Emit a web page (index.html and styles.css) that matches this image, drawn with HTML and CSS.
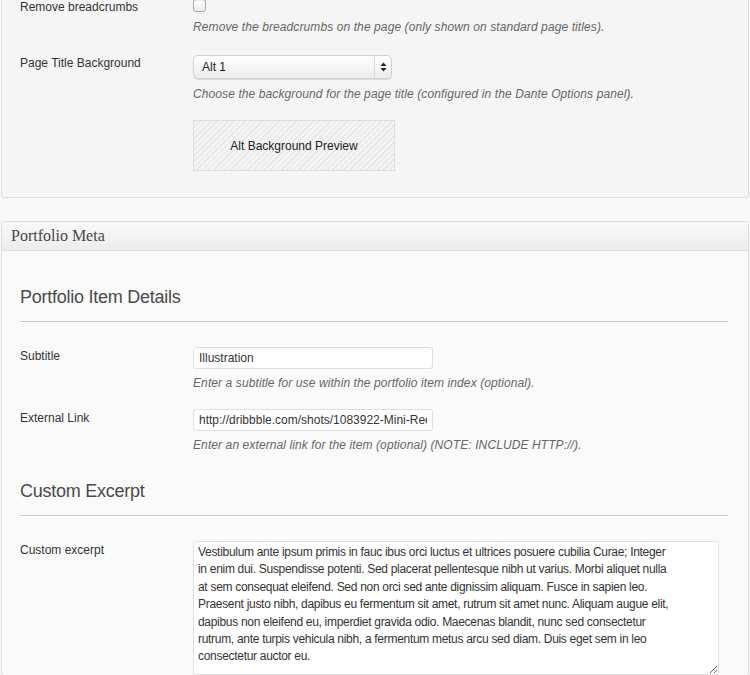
FILE: index.html
```html
<!DOCTYPE html>
<html>
<head>
<meta charset="utf-8">
<link rel="stylesheet" href="styles.css">
</head>
<body>
<div class="page">
  <section class="panel panel-top">
    <div class="field">
      <div class="label">Remove breadcrumbs</div>
      <div class="control">
        <div class="check-line"><span class="checkbox"></span></div>
        <p class="desc">Remove the breadcrumbs on the page (only shown on standard page titles).</p>
      </div>
    </div>
    <div class="field">
      <div class="label">Page Title Background</div>
      <div class="control">
        <div class="select">
          <span class="select-value">Alt 1</span>
          <span class="select-arrows">
            <svg width="7" height="10" viewBox="0 0 7 10"><path d="M3.5 0.5 L6.5 4 L0.5 4 Z M3.5 9.5 L6.5 6 L0.5 6 Z" fill="#222"/></svg>
          </span>
        </div>
        <p class="desc">Choose the background for the page title (configured in the Dante Options panel).</p>
        <div class="preview">Alt Background Preview</div>
      </div>
    </div>
  </section>

  <section class="panel panel-meta">
    <header class="panel-head">Portfolio Meta</header>
    <div class="panel-body">
      <h2 class="section-title first">Portfolio Item Details</h2>
      <div class="rule"></div>
      <div class="field">
        <div class="label">Subtitle</div>
        <div class="control">
          <input class="text" type="text" value="Illustration">
          <p class="desc">Enter a subtitle for use within the portfolio item index (optional).</p>
        </div>
      </div>
      <div class="field">
        <div class="label">External Link</div>
        <div class="control">
          <input class="text" type="text" value="http://dribbble.com/shots/1083922-Mini-Reel">
          <p class="desc">Enter an external link for the item (optional) (NOTE: INCLUDE HTTP://).</p>
        </div>
      </div>
      <h2 class="section-title">Custom Excerpt</h2>
      <div class="rule"></div>
      <div class="field">
        <div class="label">Custom excerpt</div>
        <div class="control">
          <textarea class="area">Vestibulum ante ipsum primis in fauc ibus orci luctus et ultrices posuere cubilia Curae; Integer
in enim dui. Suspendisse potenti. Sed placerat pellentesque nibh ut varius. Morbi aliquet nulla
at sem consequat eleifend. Sed non orci sed ante dignissim aliquam. Fusce in sapien leo.
Praesent justo nibh, dapibus eu fermentum sit amet, rutrum sit amet nunc. Aliquam augue elit,
dapibus non eleifend eu, imperdiet gravida odio. Maecenas blandit, nunc sed consectetur
rutrum, ante turpis vehicula nibh, a fermentum metus arcu sed diam. Duis eget sem in leo
consectetur auctor eu.</textarea>
        </div>
      </div>
    </div>
  </section>
</div>
</body>
</html>
```

FILE: styles.css
```css
html, body {
  margin: 0;
  padding: 0;
}
body {
  background: #f8f8f8;
  font-family: "Liberation Sans", Arial, sans-serif;
  font-size: 12px;
  color: #333;
  overflow: hidden;
}
.page {
  padding: 0 1px;
}
.panel {
  border: 1px solid #dfdfdf;
  border-radius: 3px;
}
.panel-top {
  background: #f5f5f5;
  margin-top: -21px;
  padding: 18px 0 26px;
}
.field {
  display: grid;
  grid-template-columns: 173px 1fr;
  padding-left: 18px;
}
.field + .field {
  margin-top: 18px;
}
.label {
  line-height: 18px;
  color: #333;
}
.control {
  min-width: 0;
}
.desc {
  margin: 5px 0 0;
  line-height: 18px;
  font-style: italic;
  letter-spacing: 0.1px;
  color: #666;
}
.check-line {
  height: 14px;
  padding-top: 1px;
}
.checkbox {
  display: block;
  width: 11px;
  height: 11px;
  border: 1px solid #aaa;
  border-radius: 3px;
  background: linear-gradient(#fff, #ececec);
  box-shadow: inset 0 1px 1px rgba(0,0,0,0.08);
}
.select {
  position: relative;
  width: 197px;
  height: 22px;
  margin-top: 1px;
  border: 1px solid #d2d2d2;
  border-radius: 5px;
  background: linear-gradient(#ffffff, #ececec);
  box-shadow: 0 1px 1px rgba(0,0,0,0.12);
  display: flex;
  align-items: center;
}
.select-value {
  padding-left: 8px;
  flex: 1;
  color: #222;
}
.select-arrows {
  width: 16px;
  height: 22px;
  border-left: 1px solid #d8d8d8;
  display: flex;
  align-items: center;
  justify-content: center;
}
.panel-top .field:nth-child(2) .desc {
  margin-top: 6px;
}
.preview {
  margin-top: 17px;
  width: 200px;
  height: 49px;
  border: 1px solid #dedede;
  background-color: #f3f3f3;
  background-image: repeating-linear-gradient(135deg, #e6e6e6 0, #e6e6e6 1px, transparent 1px, transparent 4px);
  display: flex;
  align-items: center;
  justify-content: center;
  color: #222;
}
.panel-meta {
  margin-top: 23px;
  background: #fafafa;
}
.panel-head {
  height: 28px;
  line-height: 28px;
  padding-left: 9px;
  border-bottom: 1px solid #dcdcdc;
  background: linear-gradient(#f9f9f9, #ececec);
  font-family: "Liberation Serif", Georgia, serif;
  font-size: 16px;
  color: #464646;
}
.panel-body {
  padding: 34px 20px 0 0;
}
.section-title {
  margin: 0 0 0 18px;
  font-size: 18px;
  line-height: 24px;
  font-weight: normal;
  letter-spacing: -0.25px;
  color: #4a4a4a;
}
.section-title:not(.first) {
  margin-top: 25px;
}
.rule {
  margin: 12px 0 24px 18px;
  height: 1px;
  background: #cccccc;
  border-bottom: 1px solid #fff;
}
.text {
  display: block;
  box-sizing: border-box;
  width: 240px;
  height: 22px;
  margin: 0;
  padding: 0 5px;
  border: 1px solid #dfdfdf;
  border-radius: 3px;
  background: #fff;
  font-family: "Liberation Sans", Arial, sans-serif;
  font-size: 12px;
  color: #333;
  outline: none;
}
.panel-meta .field + .field {
  margin-top: 17px;
}
.area {
  display: block;
  box-sizing: border-box;
  width: 526px;
  height: 134px;
  margin: 0;
  padding: 2px 4px 1px;
  border: 1px solid #dfdfdf;
  border-radius: 3px;
  background: #fff;
  font-family: "Liberation Sans", Arial, sans-serif;
  font-size: 12px;
  line-height: 17.4px;
  letter-spacing: -0.3px;
  color: #333;
  outline: none;
  white-space: pre-wrap;
  overflow: hidden;
}
```
